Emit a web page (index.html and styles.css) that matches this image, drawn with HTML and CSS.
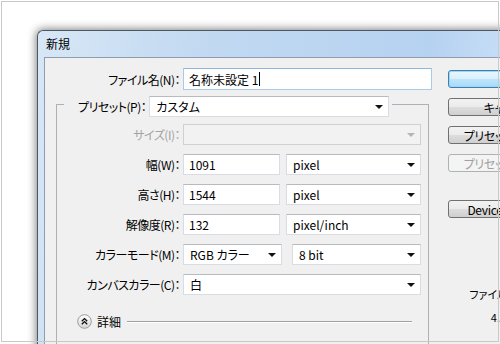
FILE: index.html
```html
<!DOCTYPE html>
<html lang="ja">
<head>
    <meta charset="UTF-8">
    <meta name="viewport" content="width=device-width, initial-scale=1.0">
    <title>新規</title>
    <link rel="stylesheet" href="styles.css">
</head>
<body>
    <div class="stage">
        <div class="window">
            <div class="titlebar">新規</div>
            <div class="client">
                <div class="form">
                    <div class="name-row">
                        <span class="label">ファイル名(N)：</span>
                        <div class="field focus">名称未設定 1<span class="caret"></span></div>
                    </div>

                    <fieldset class="group">
                        <legend class="legend">
                            <span class="label">プリセット(P)：</span>
                            <div class="field select preset">カスタム<span class="arrow"></span></div>
                        </legend>

                        <div class="rows">
                            <span class="label disabled">サイズ(I)：</span>
                            <div class="field select off"><span class="arrow"></span></div>

                            <span class="label">幅(W)：</span>
                            <div class="pair">
                                <div class="field num">1091</div>
                                <div class="field select unit">pixel<span class="arrow"></span></div>
                            </div>

                            <span class="label">高さ(H)：</span>
                            <div class="pair">
                                <div class="field num">1544</div>
                                <div class="field select unit">pixel<span class="arrow"></span></div>
                            </div>

                            <span class="label">解像度(R)：</span>
                            <div class="pair">
                                <div class="field num">132</div>
                                <div class="field select unit">pixel/inch<span class="arrow"></span></div>
                            </div>

                            <span class="label">カラーモード(M)：</span>
                            <div class="pair wide-gap">
                                <div class="field select mode">RGB カラー<span class="arrow"></span></div>
                                <div class="field select depth">8 bit<span class="arrow"></span></div>
                            </div>

                            <span class="label">カンバスカラー(C)：</span>
                            <div class="field select">白<span class="arrow"></span></div>

                            <div class="advanced">
                                <svg class="toggle" width="15" height="15" viewBox="0 0 15 15">
                                    <defs>
                                        <linearGradient id="knob" x1="0" y1="0" x2="0" y2="1">
                                            <stop offset="0" stop-color="#ffffff"/>
                                            <stop offset="1" stop-color="#d6d6d6"/>
                                        </linearGradient>
                                    </defs>
                                    <circle cx="7.5" cy="7.5" r="6.8" fill="url(#knob)" stroke="#9a9a9a"/>
                                    <path d="M4.8 7.2 L7.5 4.6 L10.2 7.2 M4.8 10.2 L7.5 7.6 L10.2 10.2" fill="none" stroke="#111" stroke-width="1.4"/>
                                </svg>
                                <span>詳細</span>
                                <span class="rule"></span>
                            </div>
                        </div>
                    </fieldset>
                </div>

                <div class="side">
                    <div class="btn default">OK</div>
                    <div class="btn">キャンセル</div>
                    <div class="btn">プリセットを保存...</div>
                    <div class="btn off">プリセットを削除...</div>
                    <div class="btn device">Device Central...</div>
                    <div class="info">ファイルサイズ：</div>
                    <div class="info size">4.82M</div>
                </div>
            </div>
        </div>
    </div>
</body>
</html>
```

FILE: styles.css
```css
* {
    box-sizing: border-box;
}

body {
    margin: 0;
    font-family: "Noto Sans CJK JP", "Noto Sans", sans-serif;
    font-size: 12px;
    color: #000;
    font-feature-settings: "palt";
}

.stage {
    position: relative;
    width: 500px;
    height: 344px;
    overflow: hidden;
    background: #fff;
    padding: 30px 0 0 37px;
}
.stage::after {
    content: "";
    position: absolute;
    top: 1px;
    left: 1px;
    right: 1px;
    bottom: 2px;
    border: 1px solid #c9c9c9;
    pointer-events: none;
}

.window {
    width: 600px;
    height: 340px;
    display: flex;
    flex-direction: column;
    padding-left: 6px;
    border-left: 1px solid #4d5866;
    border-top: 1px solid #4d5866;
    border-radius: 6px 0 0 0;
    background: linear-gradient(100deg, #d8e7f6 0%, #c2d9f1 25%, #b6d2f1 60%, #d2e6fa 80%, #bcd7f4 95%);
    box-shadow: 0 0 9px 1px rgba(0, 0, 0, 0.5);
}

.titlebar {
    height: 26px;
    line-height: 26px;
    padding-left: 2px;
}

.client {
    flex: 1;
    display: flex;
    gap: 16px;
    padding-top: 10px;
    background: #f0f0f0;
    border-left: 1px solid #8d9cae;
    border-top: 1px solid #8d9cae;
}

.form {
    width: 387px;
}

.label {
    text-align: right;
    white-space: nowrap;
    letter-spacing: -0.5px;
}
.label.disabled {
    color: #a3a3a3;
}

.name-row {
    display: grid;
    grid-template-columns: 135px 249px;
    column-gap: 3px;
    align-items: center;
    height: 22px;
}

.field {
    display: flex;
    align-items: center;
    height: 21px;
    padding-left: 5px;
    background: #fff;
    border: 1px solid #d9dce2;
    border-top-color: #b7bac0;
    white-space: nowrap;
}
.field.focus {
    height: 22px;
    border-color: #a9cbe8;
    border-top-color: #8fb6db;
}
.caret {
    width: 1px;
    height: 14px;
    margin-left: 1px;
    background: #000;
}
.select {
    padding-left: 6px;
}
.arrow {
    margin-left: auto;
    margin-right: 5px;
    border-left: 4px solid transparent;
    border-right: 4px solid transparent;
    border-top: 4px solid #111;
}
.field.off {
    background: #f2f2f2;
    border-color: #d0d0d0;
}
.field.off .arrow {
    border-top-color: #b4b4b4;
}

.group {
    width: 373px;
    margin: 1px 0 0 11px;
    padding: 7px 0 40px 0;
    border: 1px solid #b0b0b0;
    border-bottom: none;
    min-width: 0;
}

.legend {
    display: flex;
    align-items: center;
    gap: 3px;
    margin-left: 7px;
    padding: 5px 3px 0 14px;
}
.preset {
    width: 240px;
}

.rows {
    display: grid;
    grid-template-columns: 123px 238px;
    grid-auto-rows: 21px;
    column-gap: 3px;
    row-gap: 9px;
    align-items: center;
}

.pair {
    display: flex;
    gap: 6px;
}
.pair.wide-gap {
    gap: 10px;
}
.num {
    width: 97px;
}
.unit {
    width: 135px;
}
.mode {
    width: 99px;
}
.depth {
    width: 129px;
}

.advanced {
    grid-column: 1 / -1;
    display: flex;
    align-items: center;
    margin-top: 14px;
    padding-left: 20px;
    margin-right: 9px;
    gap: 5px;
}
.rule {
    flex: 1;
    height: 1px;
    margin-left: 1px;
    background: #a0a0a0;
    box-shadow: 0 1px 0 #fff;
}

.side {
    width: 128px;
    display: flex;
    flex-direction: column;
    padding-top: 2px;
}

.btn {
    width: 124px;
    height: 18px;
    margin-bottom: 10px;
    display: flex;
    align-items: center;
    justify-content: center;
    border: 1px solid #707070;
    border-radius: 3px;
    background: linear-gradient(#f2f2f2 0%, #ebebeb 50%, #dddddd 51%, #cfcfcf 100%);
    white-space: nowrap;
    letter-spacing: -0.3px;
}
.btn.default {
    border-color: #3c7fb1;
    background: linear-gradient(#eaf6fd 0%, #d9f0fc 50%, #bee6fd 51%, #a7d9f5 100%);
    box-shadow: inset 0 0 0 1px #9fd5f5;
}
.btn.off {
    color: #a0a0a0;
    border-color: #adb2b5;
    background: #f4f4f4;
}
.btn.device {
    margin-top: 18px;
}

.info {
    width: 116px;
    font-size: 11px;
    line-height: 14px;
    text-align: center;
    margin-top: 59px;
}
.info.size {
    margin-top: 9px;
}
```
